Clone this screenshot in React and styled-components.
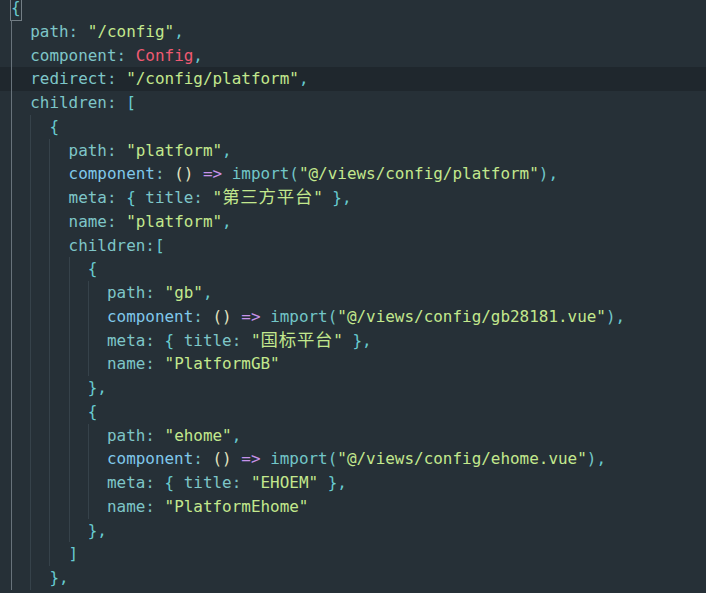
import React from "react";
import styled, { createGlobalStyle } from "styled-components";

const Global = createGlobalStyle`
  html, body { margin: 0; padding: 0; background: #263037; overflow: hidden; }
  #root { width: 706px; height: 593px; }
`;

const COLORS = {
  key: "#7ec6c8",
  fn: "#80c8ea",
  str: "#c3e88d",
  punc: "#68cbd0",
  colon: "#78bfc2",
  paren: "#e2e4c0",
  arrow: "#c792ea",
  cls: "#ef5a72",
  kw: "#72c6c8",
};

const Editor = styled.div`
  width: 706px;
  height: 593px;
  background: #263037;
  overflow: hidden;
  font-family: "DejaVu Sans Mono", "Liberation Mono", monospace;
  font-size: 15.95px;
`;

const Code = styled.div`
  margin-top: -4px;
  display: flex;
  flex-direction: column;
`;

const Line = styled.div`
  display: flex;
  height: 23.75px;
  line-height: 23.75px;
  padding-left: 11px;
  background: ${(p) => (p.$current ? "#1f272d" : "transparent")};
`;

const Guide = styled.span`
  flex: none;
  width: 2ch;
  box-sizing: border-box;
  border-left: 1px solid ${(p) => (p.$active ? "#68737b" : "#36424a")};
`;

const Content = styled.span`
  white-space: pre;
`;

const Tok = styled.span`
  color: ${(p) => COLORS[p.$kind]};
`;

const Cjk = styled.span`
  font-family: "Noto Sans CJK SC", sans-serif;
  font-size: 17.4px;
  letter-spacing: 0.8px;
  line-height: 0;
`;

const MatchBracket = styled.span`
  display: inline-block;
  height: 23.75px;
  vertical-align: top;
  box-shadow: 0 0 0 1px #737e85;
  color: ${COLORS.punc};
`;

const L = (lvl, toks, extra = {}) => ({ lvl, toks, ...extra });

const lines = [
  L(0, [["match", "{"]]),
  L(1, [["key", "path"], ["colon", ": "], ["str", '"/config"'], ["punc", ","]]),
  L(1, [["key", "component"], ["colon", ": "], ["cls", "Config"], ["punc", ","]]),
  L(1, [["key", "redirect"], ["colon", ": "], ["str", '"/config/platform"'], ["punc", ","]], { current: true }),
  L(1, [["key", "children"], ["colon", ": "], ["punc", "["]]),
  L(2, [["punc", "{"]]),
  L(3, [["key", "path"], ["colon", ": "], ["str", '"platform"'], ["punc", ","]]),
  L(3, [["fn", "component"], ["colon", ": "], ["paren", "()"], ["plain", " "], ["arrow", "=>"], ["plain", " "], ["kw", "import("], ["str", '"@/views/config/platform"'], ["kw", ")"], ["punc", ","]]),
  L(3, [["key", "meta"], ["colon", ": "], ["punc", "{ "], ["key", "title"], ["colon", ": "], ["str", '"'], ["cjk", "第三方平台"], ["str", '"'], ["punc", " },"]]),
  L(3, [["key", "name"], ["colon", ": "], ["str", '"platform"'], ["punc", ","]]),
  L(3, [["key", "children"], ["colon", ":"], ["punc", "["]]),
  L(4, [["punc", "{"]]),
  L(5, [["key", "path"], ["colon", ": "], ["str", '"gb"'], ["punc", ","]]),
  L(5, [["fn", "component"], ["colon", ": "], ["paren", "()"], ["plain", " "], ["arrow", "=>"], ["plain", " "], ["kw", "import("], ["str", '"@/views/config/gb28181.vue"'], ["kw", ")"], ["punc", ","]]),
  L(5, [["key", "meta"], ["colon", ": "], ["punc", "{ "], ["key", "title"], ["colon", ": "], ["str", '"'], ["cjk", "国标平台"], ["str", '"'], ["punc", " },"]]),
  L(5, [["key", "name"], ["colon", ": "], ["str", '"PlatformGB"']]),
  L(4, [["punc", "},"]]),
  L(4, [["punc", "{"]]),
  L(5, [["key", "path"], ["colon", ": "], ["str", '"ehome"'], ["punc", ","]]),
  L(5, [["fn", "component"], ["colon", ": "], ["paren", "()"], ["plain", " "], ["arrow", "=>"], ["plain", " "], ["kw", "import("], ["str", '"@/views/config/ehome.vue"'], ["kw", ")"], ["punc", ","]]),
  L(5, [["key", "meta"], ["colon", ": "], ["punc", "{ "], ["key", "title"], ["colon", ": "], ["str", '"EHOEM"'], ["punc", " },"]]),
  L(5, [["key", "name"], ["colon", ": "], ["str", '"PlatformEhome"']]),
  L(4, [["punc", "},"]]),
  L(3, [["punc", "]"]]),
  L(2, [["punc", "},"]]),
];

function renderTok([kind, text], i) {
  if (kind === "match") return <MatchBracket key={i}>{text}</MatchBracket>;
  if (kind === "cjk")
    return (
      <Tok key={i} $kind="str">
        <Cjk>{text}</Cjk>
      </Tok>
    );
  if (kind === "plain") return <span key={i}>{text}</span>;
  return (
    <Tok key={i} $kind={kind}>
      {text}
    </Tok>
  );
}

export default function App() {
  return (
    <>
      <Global />
      <Editor>
        <Code>
          {lines.map((ln, idx) => (
            <Line key={idx} $current={ln.current}>
              {Array.from({ length: ln.lvl }).map((_, g) => (
                <Guide key={g} $active={g === 0} />
              ))}
              <Content>{ln.toks.map(renderTok)}</Content>
            </Line>
          ))}
        </Code>
      </Editor>
    </>
  );
}
